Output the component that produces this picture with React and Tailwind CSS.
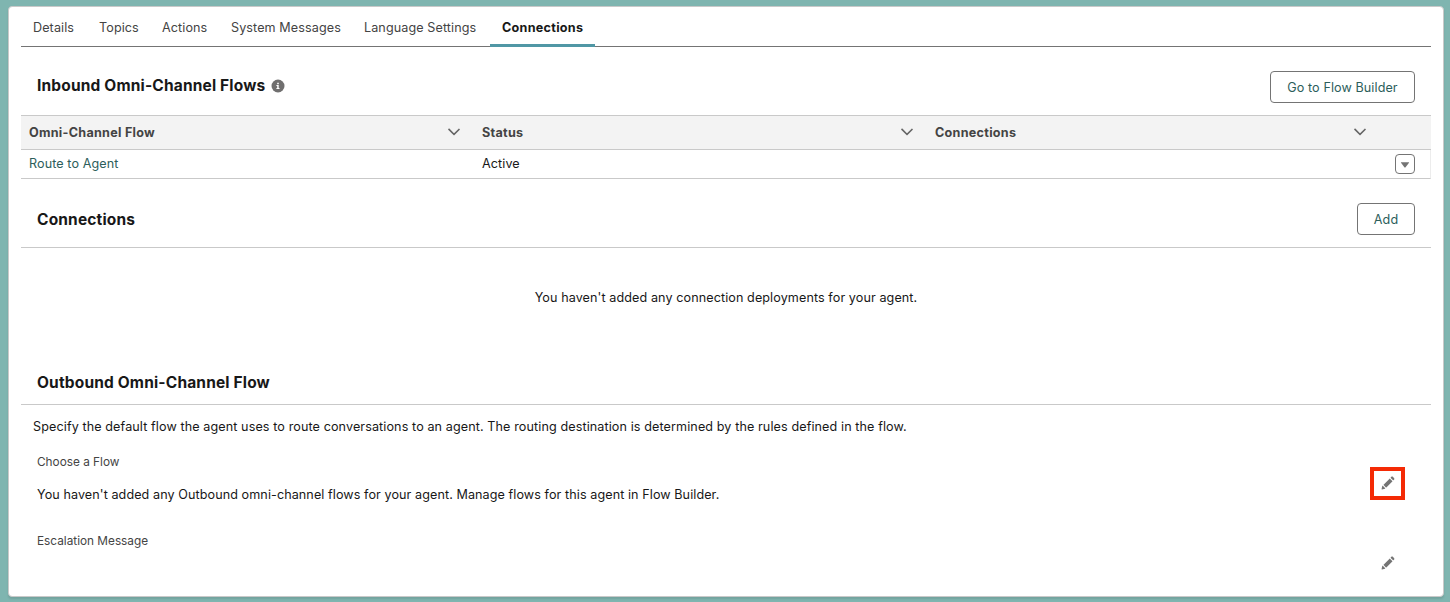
import React from 'react';

function Chevron() {
  return (
    <svg className="mb-[2px] h-[14px] w-[14px] shrink-0 fill-[#666]" viewBox="0 0 52 52">
      <path d="M47.6 17.8L27.1 38.5c-.6.6-1.5.6-2.1 0L4.4 17.8c-.6-.6-.6-1.6 0-2.2l2.2-2.2c.6-.6 1.6-.6 2.2 0l16.1 16.3c.6.6 1.6.6 2.2 0l16.1-16.2c.6-.6 1.6-.6 2.2 0l2.2 2.2c.6.5.6 1.5 0 2.1z" />
    </svg>
  );
}

function Pencil() {
  return (
    <svg className="h-[14px] w-[14px] shrink-0 fill-[#747474]" viewBox="0 0 52 52">
      <path d="M9.5 33.4l8.9 8.9c.4.4 1 .4 1.4 0L42 20c.4-.4.4-1 0-1.4l-8.8-8.8c-.4-.4-1-.4-1.4 0L9.5 32.1c-.4.4-.4 1 0 1.3zM36.1 5.7c-.4.4-.4 1 0 1.4l8.8 8.8c.4.4 1 .4 1.4 0l2.5-2.5c1.6-1.5 1.6-3.9 0-5.5l-4.7-4.7c-1.6-1.6-4.1-1.6-5.7 0l-2.3 2.5zM2.1 48.2c-.2 1 .7 1.9 1.7 1.7l10.9-2.6c.4-.1.7-.3.9-.5l.2-.2c.2-.2.3-.9-.1-1.3l-9-9c-.4-.4-1.1-.3-1.3-.1l-.2.2c-.3.3-.4.6-.5.9L2.1 48.2z" />
    </svg>
  );
}

function Info() {
  return (
    <svg className="ml-[6px] h-[14px] w-[14px] shrink-0" viewBox="0 0 14 14">
      <circle cx="7" cy="7" r="6.5" fill="#706f6f" />
      <path fill="#fff" d="M6.2 3.8h1.6v1.4H6.2zM5.4 6.1h2.3v3h.8v.8H5.4v-.8h.8V6.9h-.8z" />
    </svg>
  );
}

const tabs = [
  ['Details', 'w-[66px]'],
  ['Topics', 'w-[63px]'],
  ['Actions', 'w-[69px]'],
  ['System Messages', 'w-[133px]'],
  ['Language Settings', 'w-[138px]'],
];

const columns = ['Omni-Channel Flow', 'Status', 'Connections'];

function Heading({ children }) {
  return <h2 className="text-[15.5px] leading-5 font-bold tracking-[0.16px]">{children}</h2>;
}

function OutlineButton({ children, className }) {
  return (
    <button
      className={`flex h-8 items-center justify-center rounded-[4px] border border-[#747474] bg-white pt-px tracking-[0.09px] text-[#2c5e5b] ${className}`}
    >
      {children}
    </button>
  );
}

export default function App() {
  return (
    <div className="flex h-[602px] w-[1450px] bg-[#7fb5b0] pt-[6px] pr-[6px] pb-[5px] pl-[8px] font-['Inter',sans-serif] text-[12.6px] leading-5 tracking-[0.09px] text-[#181818]">
      <main className="flex flex-1 flex-col rounded-[4px] border border-[#c9c9c9] bg-white px-3 whitespace-nowrap shadow-[0_2px_2px_rgba(0,0,0,0.1)]">
        <nav className="flex h-10 border-b border-[#747474] text-[#444]">
          {tabs.map(([label, width]) => (
            <a key={label} className={`flex h-10 items-center pt-px pl-3 ${width}`}>
              {label}
            </a>
          ))}
          <a className="flex h-10 w-[105px] items-center border-b-[3px] border-[#5097a5] pt-1 pl-3 font-bold tracking-[0.27px] text-[#181818]">
            Connections
          </a>
        </nav>

        <header className="flex h-[68px] items-start justify-between px-4 pt-6">
          <div className="flex items-center pt-[5px]">
            <Heading>Inbound Omni-Channel Flows</Heading>
            <Info />
          </div>
          <OutlineButton className="w-[145px]">Go to Flow Builder</OutlineButton>
        </header>

        <section>
          <div className="flex h-[35px] border-y border-[#c9c9c9] bg-[#f3f3f3] font-bold tracking-[0.27px] text-[#444]">
            {columns.map((name) => (
              <div key={name} className="flex w-[453px] items-center justify-between pr-[13px] pl-2">
                <span>{name}</span>
                <Chevron />
              </div>
            ))}
          </div>
          <div className="flex h-[29px] items-center border-r border-b border-r-[#ececec] border-b-[#c9c9c9]">
            <a className="w-[453px] pb-px pl-2 text-[#2c5e5b]">Route to Agent</a>
            <span className="w-[453px] pb-px pl-2">Active</span>
            <button className="mr-[15px] ml-auto flex h-5 w-5 items-center justify-center rounded-[4px] border border-[#747474] pt-[2px]">
              <svg className="h-[6px] w-[10px] fill-[#747474]" viewBox="0 0 10 6">
                <path d="M1.2.2h7.6q.5 0 .2.5L5.4 5.4q-.4.4-.8 0L1 .7Q.7.2 1.2.2z" />
              </svg>
            </button>
          </div>
        </section>

        <header className="flex h-[69px] items-start justify-between border-b border-[#c9c9c9] px-4 pt-6">
          <div className="pt-[7px]">
            <Heading>Connections</Heading>
          </div>
          <OutlineButton className="w-[58px]">Add</OutlineButton>
        </header>
        <p className="flex h-[100px] items-center justify-center pb-px">
          You haven&apos;t added any connection deployments for your agent.
        </p>

        <header className="h-[57px] border-b border-[#c9c9c9] px-4 pt-[25px]">
          <Heading>Outbound Omni-Channel Flow</Heading>
        </header>
        <p className="mt-3 ml-3 tracking-[0.1px]">
          Specify the default flow the agent uses to route conversations to an agent. The routing destination is
          determined by the rules defined in the flow.
        </p>
        <div className="mt-[14px] flex justify-between pr-[26px] pl-4">
          <div className="pt-px">
            <div className="text-[11.8px] leading-5 tracking-normal text-[#444]">Choose a Flow</div>
            <p className="mt-[13px] tracking-[0.08px]">
              You haven&apos;t added any Outbound omni-channel flows for your agent. Manage flows for this agent in
              Flow Builder.
            </p>
          </div>
          <button className="mt-4 flex h-[33px] w-[35px] items-center justify-center border-4 border-[#f42a05] pb-[2px]">
            <Pencil />
          </button>
        </div>
        <div className="mt-[26px] flex justify-between pr-9 pl-4">
          <div className="text-[11.8px] leading-5 tracking-normal text-[#444]">Escalation Message</div>
          <button className="mt-[25px] flex h-[14px]">
            <Pencil />
          </button>
        </div>
      </main>
    </div>
  );
}
